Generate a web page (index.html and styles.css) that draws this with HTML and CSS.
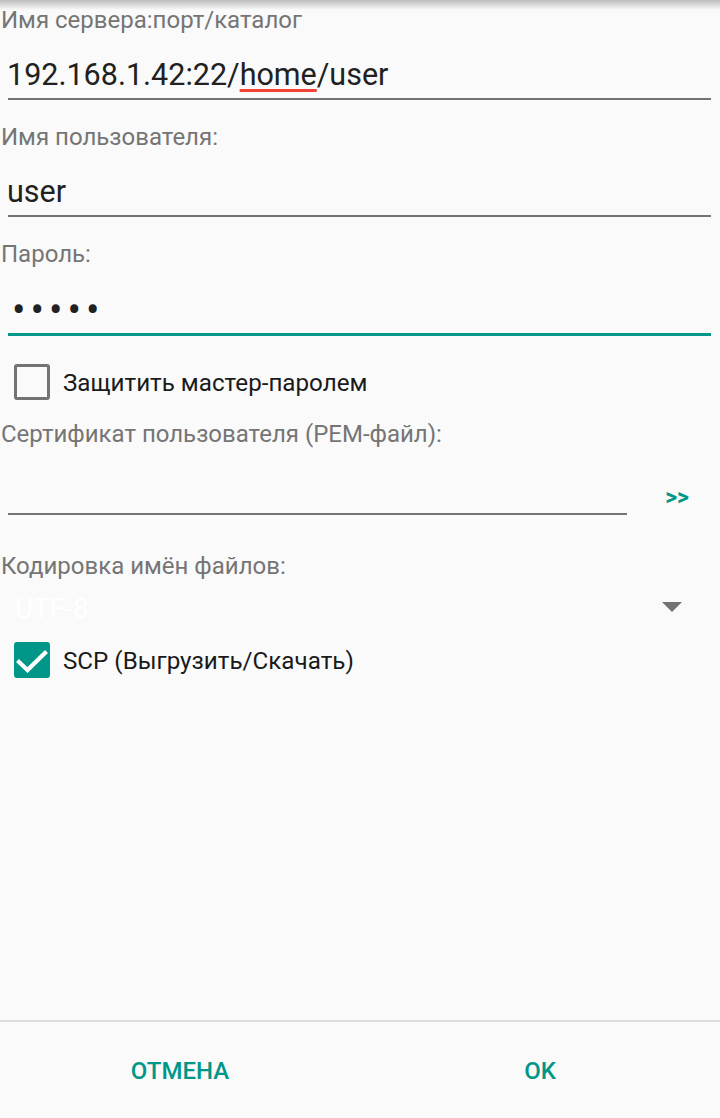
FILE: index.html
```html
<!DOCTYPE html>
<html lang="ru">
<head>
<meta charset="utf-8">
<title>SFTP</title>
<link rel="stylesheet" href="styles.css">
</head>
<body>
<div class="top-shadow"></div>
<main class="form">
  <div class="field">
    <div class="label">Имя сервера:порт/каталог</div>
    <div class="input">192.168.1.42:22/<span class="misspelled">home</span>/user</div>
  </div>
  <div class="field">
    <div class="label">Имя пользователя:</div>
    <div class="input">user</div>
  </div>
  <div class="field">
    <div class="label">Пароль:</div>
    <div class="input focused"><span class="dots">•••••</span></div>
  </div>
  <div class="check-row first-check">
    <span class="box"></span>
    <span class="check-text">Защитить мастер-паролем</span>
  </div>
  <div class="label cert-label">Сертификат пользователя (PEM-файл):</div>
  <div class="cert-row">
    <div class="input cert-input"></div>
    <div class="browse">&gt;&gt;</div>
  </div>
  <div class="label enc-label">Кодировка имён файлов:</div>
  <div class="select-row">
    <span class="select-value">UTF-8</span>
    <svg class="caret" width="20" height="10" viewBox="0 0 20 10"><polygon points="0,0 20,0 10,10" fill="#737373"/></svg>
  </div>
  <div class="check-row second-check">
    <span class="box checked">
      <svg width="36" height="36" viewBox="0 0 36 36"><polyline points="5,20 13.5,28 31,11" fill="none" stroke="#fff" stroke-width="4.2" stroke-linecap="square"/></svg>
    </span>
    <span class="check-text">SCP (Выгрузить/Скачать)</span>
  </div>
</main>
<footer class="buttons">
  <div class="btn">ОТМЕНА</div>
  <div class="btn">OK</div>
</footer>
</body>
</html>
```

FILE: styles.css
```css
html, body {
  margin: 0;
  padding: 0;
}
body {
  width: 720px;
  height: 1118px;
  background: #fafafa;
  font-family: Roboto, "Noto Sans", sans-serif;
  display: flex;
  flex-direction: column;
  overflow: hidden;
  position: relative;
}
.top-shadow {
  position: absolute;
  left: 0;
  top: 0;
  width: 100%;
  height: 10px;
  background: linear-gradient(rgba(0,0,0,0.25), rgba(0,0,0,0));
  pointer-events: none;
}
.form {
  flex: 1;
  display: flex;
  flex-direction: column;
  padding-top: 6px;
}
.label {
  font-size: 24px;
  line-height: 28px;
  height: 28px;
  color: #757575;
  padding-left: 1px;
  white-space: nowrap;
}
.field {
  display: flex;
  flex-direction: column;
  margin-bottom: 23px;
}
.field .label + .input {
  margin-top: 22px;
}
.input {
  margin: 0 9px 0 8px;
  height: 36px;
  line-height: 38px;
  padding-bottom: 6px;
  font-size: 30.5px;
  color: #212121;
  border-bottom: 2px solid #737373;
  text-indent: -1px;
  white-space: nowrap;
}
.input.focused {
  border-bottom: 3px solid #009688;
  padding-bottom: 7px;
}
.misspelled {
  text-decoration: underline;
  text-decoration-color: #f44336;
  text-decoration-thickness: 3px;
  text-underline-offset: 4px;
  text-decoration-skip-ink: none;
}
.dots {
  font-size: 40px;
  letter-spacing: 5px;
  position: relative;
  top: 2px;
  padding-left: 5px;
  color: #212121;
}
.check-row {
  display: flex;
  align-items: center;
  height: 48px;
  padding-left: 14px;
}
.first-check {
  margin-top: -1px;
}
.box {
  width: 36px;
  height: 36px;
  box-sizing: border-box;
  border: 3px solid #737373;
  border-radius: 3px;
  flex: none;
  display: flex;
}
.box.checked {
  border: none;
  background: #009688;
}
.check-text {
  margin-left: 13px;
  font-size: 24.2px;
  color: #1a1a1a;
  white-space: nowrap;
  position: relative;
  top: 1px;
}
.cert-label {
  margin-top: 14px;
}
.cert-row {
  display: flex;
  margin-top: 23px;
}
.cert-input {
  flex: 1;
  margin-right: 0;
}
.browse {
  width: 93px;
  box-sizing: border-box;
  padding-left: 7px;
  flex: none;
  text-align: center;
  font-size: 23px;
  font-weight: bold;
  color: #009688;
  line-height: 44px;
  padding-top: 5px;
  letter-spacing: 0px;
}
.enc-label {
  margin-top: 32px;
}
.select-row {
  margin-top: 3px;
  height: 48px;
  display: flex;
  align-items: center;
  justify-content: space-between;
  padding: 0 38px 0 15px;
}
.select-value {
  font-size: 28px;
  color: #ffffff;
  position: relative;
  top: 1px;
}
.caret {
  display: block;
}
.second-check {
  margin-top: 5px;
}
.buttons {
  height: 96px;
  border-top: 2px solid #dcdcdc;
  display: flex;
  flex: none;
}
.btn {
  flex: 1;
  text-align: center;
  font-size: 24px;
  font-weight: 500;
  color: #009688;
  line-height: 96px;
  padding-top: 1px;
  box-sizing: border-box;
  height: 96px;
}
```
